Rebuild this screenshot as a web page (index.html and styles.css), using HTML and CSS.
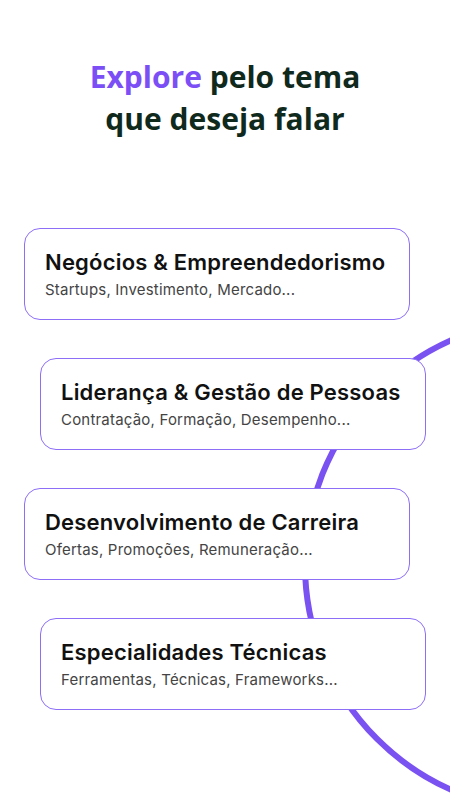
FILE: index.html
```html
<!DOCTYPE html>
<html lang="pt-BR">

<head>
    <meta charset="UTF-8">
    <meta name="viewport" content="width=device-width, initial-scale=1.0">
    <title>Explore pelo tema</title>
    <link rel="stylesheet" href="styles.css">
</head>

<body>
    <main class="screen">
        <div class="ring"></div>

        <h1 class="headline"><span class="accent">Explore</span> pelo tema<br>que deseja falar</h1>

        <section class="topics">
            <div class="topic">
                <h2>Negócios &amp; Empreendedorismo</h2>
                <p>Startups, Investimento, Mercado...</p>
            </div>
            <div class="topic shifted">
                <h2>Liderança &amp; Gestão de Pessoas</h2>
                <p>Contratação, Formação, Desempenho...</p>
            </div>
            <div class="topic">
                <h2>Desenvolvimento de Carreira</h2>
                <p>Ofertas, Promoções, Remuneração...</p>
            </div>
            <div class="topic shifted">
                <h2>Especialidades Técnicas</h2>
                <p>Ferramentas, Técnicas, Frameworks...</p>
            </div>
        </section>
    </main>
</body>

</html>
```

FILE: styles.css
```css
* {
    margin: 0;
    padding: 0;
    box-sizing: border-box;
}

body {
    background-color: #ffffff;
    font-family: 'Inter', 'Noto Sans', Arial, sans-serif;
}

.screen {
    position: relative;
    width: 450px;
    height: 800px;
    overflow: hidden;
    padding-top: 56px;
}

/* decorative circle behind the cards */
.ring {
    position: absolute;
    left: 302px;
    top: 316px;
    width: 498px;
    height: 498px;
    border: 6px solid #7b52f2;
    border-radius: 50%;
}

.headline {
    font-family: 'Open Sans', 'Noto Sans', sans-serif;
    font-size: 30px;
    font-weight: 700;
    line-height: 42px;
    text-align: center;
    color: #10291d;
}

.accent {
    color: #7b4ff5;
}

.topics {
    display: flex;
    flex-direction: column;
    gap: 38px;
    margin-top: 88px;
}

.topic {
    position: relative;
    width: 386px;
    height: 92px;
    margin-left: 24px;
    padding: 0 10px 0 20px;
    display: flex;
    flex-direction: column;
    justify-content: center;
    gap: 6px;
    background-color: #ffffff;
    border: 1px solid #8d6ef7;
    border-radius: 16px;
}

.topic.shifted {
    margin-left: 40px;
}

.topic h2 {
    font-size: 22px;
    font-weight: 600;
    line-height: 26px;
    color: #111111;
    letter-spacing: 0.2px;
    white-space: nowrap;
}

.topic p {
    font-size: 15px;
    line-height: 18px;
    color: #444444;
    letter-spacing: 0.2px;
    white-space: nowrap;
}
```
